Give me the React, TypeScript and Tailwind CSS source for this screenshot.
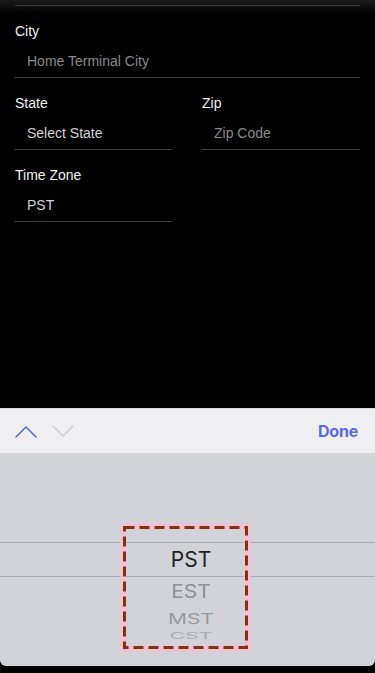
import { ReactNode } from "react";

function Field({
  label,
  value,
  muted,
  className,
}: {
  label: string;
  value: string;
  muted?: boolean;
  className?: string;
}) {
  return (
    <div className={className}>
      <div className="h-5 leading-5 text-[14px] text-[#f2f2f2]">{label}</div>
      <div
        className={`h-[37px] pl-3 pt-[10px] leading-5 text-[14px] border-b border-[#404040] ${
          muted ? "text-[#8a8a8a]" : "text-[#d4d4d4]"
        }`}
      >
        {value}
      </div>
    </div>
  );
}

function Chevron({ up, color }: { up?: boolean; color: string }) {
  return (
    <svg width="22" height="13" viewBox="0 0 22 13" fill="none">
      <path
        d={up ? "M1 12 L11 2 L21 12" : "M1 1 L11 11 L21 1"}
        stroke={color}
        strokeWidth="1.6"
        strokeLinecap="round"
        strokeLinejoin="round"
      />
    </svg>
  );
}

function WheelItem({ children, className }: { children: ReactNode; className: string }) {
  return <div className={`text-center leading-none text-[21px] ${className}`}>{children}</div>;
}

export default function App() {
  return (
    <div className="h-[673px] w-[375px] bg-black flex flex-col font-['Liberation_Sans',Arial,sans-serif] overflow-hidden">
      <div className="flex-1 bg-[linear-gradient(to_bottom,#1c1c1c_0px,#000_14px)] px-[15px] pt-[5px]">
        <div className="h-px bg-[#3a3a3a]" />
        <Field className="mt-[15px]" label="City" value="Home Terminal City" muted />
        <div className="mt-[15px] grid grid-cols-[157px_158px] gap-x-[30px]">
          <Field label="State" value="Select State" />
          <Field label="Zip" value="Zip Code" muted />
        </div>
        <Field className="mt-[15px] w-[157px]" label="Time Zone" value="PST" />
      </div>

      <div className="h-[45px] shrink-0 bg-[#efeff1] border-t border-[#dcdcde] flex items-center pl-[15px] pr-[17px]">
        <Chevron up color="#5a68dc" />
        <div className="ml-[15px]">
          <Chevron color="#cfcfd2" />
        </div>
        <div className="ml-auto text-[16px] font-bold text-[#5a6ae0] font-['Inter',sans-serif] tracking-[-0.2px]">
          Done
        </div>
      </div>

      <div className="relative h-[213px] shrink-0 bg-[#d1d3d8] rounded-b-[6px] pt-[89px] font-['Inter',sans-serif]">
        <div className="h-[35px] border-y border-[#a9abb0] flex items-center justify-center pl-[7px]">
          <WheelItem className="text-[#1f1f21]">PST</WheelItem>
        </div>
        <div className="pl-[7px]">
          <WheelItem className="mt-[4px] text-[#8f8f94] scale-y-90">EST</WheelItem>
          <WheelItem className="mt-[6px] text-[#98989d] scale-y-[0.7]">MST</WheelItem>
          <WheelItem className="-mt-[4px] text-[#acacb0] scale-y-[0.42]">CST</WheelItem>
        </div>

        <svg className="absolute left-[120px] top-[70px]" width="132" height="132" viewBox="0 0 132 132">
          <rect x="3.5" y="3.5" width="124" height="122" fill="none" stroke="#f6bfd2" strokeWidth="6" />
          <rect
            x="4.5"
            y="4.5"
            width="122"
            height="120"
            fill="none"
            stroke="#7e3414"
            strokeWidth="3"
            strokeDasharray="10 5"
          />
        </svg>
      </div>
      <div className="h-[7px] shrink-0" />
    </div>
  );
}
